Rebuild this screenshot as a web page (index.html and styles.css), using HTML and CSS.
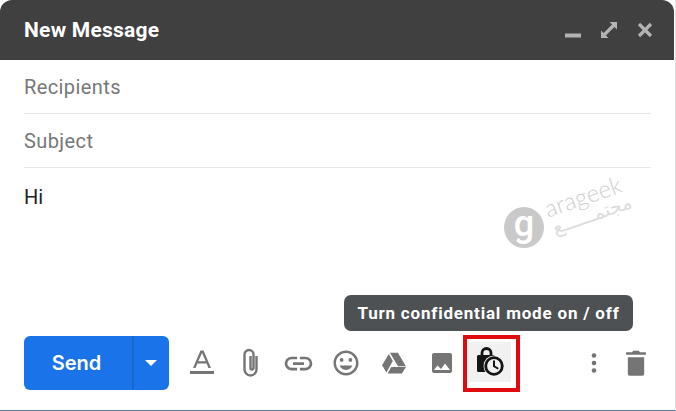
FILE: index.html
```html
<!DOCTYPE html>
<html lang="en">
<head>
    <meta charset="UTF-8">
    <meta name="viewport" content="width=device-width, initial-scale=1.0">
    <title>New Message</title>
    <link rel="stylesheet" href="styles.css">
</head>
<body>

<div class="compose">
    <!-- Dark title bar -->
    <div class="compose-header">
        <span class="compose-title">New Message</span>
        <div class="window-icons">
            <svg viewBox="0 0 16 16" class="win-icon"><path d="M0 11.500h16v4H0z"/></svg>
            <svg viewBox="0 0 16 16" class="win-icon"><path d="M8.500 0H16v7.500l-2.600-2.600-8.500 8.500L7.500 16H0V8.500l2.600 2.600 8.500-8.500z"/></svg>
            <svg viewBox="0 0 16 16" class="win-icon"><path d="M2 2l12 12M14 2 2 14" class="close-x"/></svg>
        </div>
    </div>

    <div class="field">Recipients</div>
    <div class="field">Subject</div>

    <div class="message">
        Hi
        <!-- Watermark -->
        <span class="wm-circle">g</span>
        <div class="wm-text">
            <span class="wm-latin">arageek</span>
            <span class="wm-arabic" lang="ar" dir="rtl">مجتمــــــع</span>
        </div>
    </div>

    <!-- Bottom toolbar -->
    <div class="toolbar">
        <div class="send-btn">
            <span class="send-label">Send</span>
            <span class="send-more"><span class="caret"></span></span>
        </div>

        <div class="tool">
            <svg viewBox="0 0 24 26" class="icon-format"><path d="M0 21h24v3H0z"/><path fill-rule="evenodd" d="M10.500.5h3L21 18h-2.600l-1.800-4.500H7.400L5.600 18H3zM8.300 11.200h7.400L12 3z"/></svg>
        </div>
        <div class="tool">
            <svg viewBox="0 0 24 30" class="icon-clip"><path d="M18.500 8v13.500a6 6 0 0 1-12 0V6.500a4.500 4.500 0 0 1 9 0V20a1.500 1.500 0 0 1-3 0V8"/></svg>
        </div>
        <div class="tool">
            <svg viewBox="0 0 24 24" class="icon-link"><path d="M3.900 12c0-1.710 1.390-3.100 3.100-3.100h4V7H7c-2.760 0-5 2.240-5 5s2.240 5 5 5h4v-1.900H7c-1.710 0-3.100-1.390-3.100-3.100zM8 13h8v-2H8zm9-6h-4v1.900h4c1.710 0 3.100 1.390 3.100 3.100s-1.390 3.100-3.100 3.100h-4V17h4c2.760 0 5-2.240 5-5s-2.240-5-5-5z"/></svg>
        </div>
        <div class="tool">
            <svg viewBox="0 0 24 24" class="huge"><path d="M11.990 2C6.470 2 2 6.480 2 12s4.470 10 9.990 10C17.520 22 22 17.520 22 12S17.520 2 11.990 2zM12 20c-4.420 0-8-3.580-8-8s3.580-8 8-8 8 3.580 8 8-3.580 8-8 8z"/><circle cx="15.500" cy="9.500" r="1.500"/><circle cx="8.500" cy="9.500" r="1.500"/><path d="M12 17.500c2.330 0 4.300-1.460 5.110-3.500H6.890c.8 2.040 2.780 3.500 5.110 3.500z"/></svg>
        </div>
        <div class="tool">
            <svg viewBox="0 0 24 24" class="icon-drive"><path d="M8.200 2.500h7.400l7.400 12.500h-7.300z"/><path d="M7.200 3.800l3.700 6.300L5 20.800l-4-6.800z"/><path d="M9.500 15.800H23l-3.700 6H6z"/></svg>
        </div>
        <div class="tool">
            <svg viewBox="0 0 24 24"><path d="M22 20V4c0-1.100-.9-2-2-2H4c-1.100 0-2 .9-2 2v16c0 1.100.9 2 2 2h16c1.100 0 2-.9 2-2zM7.500 14.500l3.500 3.500 4-5.500 5 6.500H4z"/></svg>
        </div>
        <div class="tool tool-lock">
            <span class="highlight"></span>
            <svg viewBox="0 0 30 30" class="lock-icon">
                <path d="M6 9V6a4.500 4.500 0 0 1 9 0v3" class="lock-line"/>
                <path d="M2.500 8h15a1 1 0 0 1 1 1v16h-16a1.500 1.500 0 0 1-1.500-1.500V9.500A1.500 1.500 0 0 1 2.500 8z"/>
                <circle cx="18" cy="19" r="10.500" class="clock-gap"/>
                <circle cx="18" cy="19" r="8.300" class="lock-line"/>
                <path d="M17 13.500h2v5.200l3.800 2.300-1 1.600-4.800-2.900z"/>
            </svg>
        </div>

        <div class="tool-end">
            <div class="tool narrow">
                <svg viewBox="0 0 24 24"><circle cx="12" cy="4.500" r="2.300"/><circle cx="12" cy="12" r="2.300"/><circle cx="12" cy="19.500" r="2.300"/></svg>
            </div>
            <div class="tool narrow">
                <svg viewBox="0 0 24 24" class="wide"><path d="M5 7h14v14.500a1.500 1.500 0 0 1-1.500 1.500h-11A1.500 1.500 0 0 1 5 21.500zM19.500 2.800H15.500L14.300 1.500H9.700L8.500 2.800H3.500V5h17V2.800z"/></svg>
            </div>
        </div>

        <div class="tooltip">Turn confidential mode on / off</div>
    </div>
</div>

</body>
</html>
```

FILE: styles.css
```css
html, body {
    margin: 0;
    padding: 0;
    background-color: #fff;
}
.compose {
    position: relative;
    display: flex;
    flex-direction: column;
    width: 676px;
    height: 411px;
    box-sizing: border-box;
    border-bottom: 1px solid #5b7aa6;
    border-right: 1px solid #e0e0e0;
    font-family: Roboto, Arial, sans-serif;
}
.compose-header {
    display: flex;
    justify-content: space-between;
    align-items: center;
    height: 60px;
    flex-shrink: 0;
    margin-right: 1px;
    padding: 0 21px 0 24px;
    background-color: #404040;
    border-radius: 12px 12px 0 0;
}
.compose-title {
    color: #fff;
    font-size: 21px;
    font-weight: 700;
    letter-spacing: 0.250px;
}
.window-icons {
    display: flex;
    gap: 20px;
    align-items: center;
}
.win-icon {
    width: 16px;
    height: 16px;
    fill: #b3b3b3;
}
.close-x {
    fill: none;
    stroke: #b3b3b3;
    stroke-width: 3.200;
}
.field {
    display: flex;
    align-items: center;
    height: 53px;
    margin: 0 24px;
    border-bottom: 1px solid #e8e8e8;
    color: #777;
    font-size: 20px;
    letter-spacing: 0.400px;
    flex-shrink: 0;
}
.message {
    position: relative;
    flex: 1;
    padding: 17px 24px 0;
    color: #222;
    font-size: 20px;
}
.wm-circle {
    position: absolute;
    left: 504px;
    top: 39px;
    display: flex;
    justify-content: center;
    align-items: center;
    box-sizing: border-box;
    width: 40px;
    height: 41px;
    padding-bottom: 7px;
    border-radius: 50%;
    background-color: #c9c9c9;
    color: #fff;
    font-family: Roboto, sans-serif;
    font-size: 36px;
    font-weight: 500;
    line-height: 30px;
}
.wm-text {
    position: absolute;
    left: 546px;
    top: 16px;
    display: flex;
    flex-direction: column;
    width: 84px;
    line-height: 21px;
    color: #cfcfcf;
    transform: rotate(-19deg);
}
.wm-latin {
    font-family: Lato, sans-serif;
    font-size: 24px;
    font-weight: 300;
}
.wm-arabic {
    font-family: "DejaVu Sans", sans-serif;
    font-size: 19px;
    font-weight: 400;
    color: #dcdcdc;
    white-space: nowrap;
}
.toolbar {
    position: relative;
    display: flex;
    align-items: center;
    height: 54px;
    margin-bottom: 20px;
    padding: 0 18px 0 24px;
    flex-shrink: 0;
}
.send-btn {
    display: flex;
    width: 145px;
    height: 54px;
    margin-right: 9px;
    background-color: #1a73e8;
    border-radius: 6px;
    color: #fff;
}
.send-label {
    display: flex;
    justify-content: center;
    align-items: center;
    width: 110px;
    padding-right: 3px;
    box-sizing: border-box;
    font-family: Inter, Roboto, sans-serif;
    font-size: 20px;
    font-weight: 600;
    border-right: 2px solid #1865cb;
}
.send-more {
    display: flex;
    flex: 1;
    justify-content: center;
    align-items: center;
    padding-right: 2px;
}
.caret {
    width: 0;
    height: 0;
    border-left: 6px solid transparent;
    border-right: 6px solid transparent;
    border-top: 6px solid #fff;
}
.tool {
    position: relative;
    display: flex;
    justify-content: center;
    align-items: center;
    width: 48px;
    height: 54px;
}
.tool svg {
    width: 24px;
    height: 24px;
    fill: #757575;
}
.tool svg.wide {
    width: 28px;
    height: 28px;
}
.tool svg.huge {
    width: 30px;
    height: 30px;
}
.tool svg.icon-link {
    width: 33px;
    height: 33px;
}
.tool svg.icon-drive {
    width: 26px;
    height: 26px;
}
.tool svg.icon-format {
    height: 26px;
}
.tool svg.icon-clip {
    height: 30px;
    fill: none;
    stroke: #757575;
    stroke-width: 2.400;
}
.tool.narrow {
    width: 42px;
}
.tool-end {
    display: flex;
    margin-left: auto;
}
.tool-lock svg.lock-icon {
    position: relative;
    width: 30px;
    height: 30px;
    margin: -2px 0 0 2px;
    fill: #141414;
}
.lock-line {
    fill: none;
    stroke: #141414;
    stroke-width: 2.800;
}
.clock-gap {
    fill: #f1f1f1;
}
/* red annotation around the confidential button */
.highlight {
    position: absolute;
    left: -3px;
    top: -1px;
    width: 42px;
    height: 40px;
    border: 4px solid #e00a0f;
    padding: 3px 5px 6px 2px;
    background-color: #f1f1f1;
    background-clip: content-box;
}
.tooltip {
    position: absolute;
    left: 344px;
    top: -41px;
    width: 289px;
    height: 36px;
    line-height: 36px;
    text-align: center;
    background-color: #4d5154;
    border-radius: 7px;
    color: #fff;
    font-size: 17px;
    font-weight: 700;
    letter-spacing: 0.800px;
}
```
